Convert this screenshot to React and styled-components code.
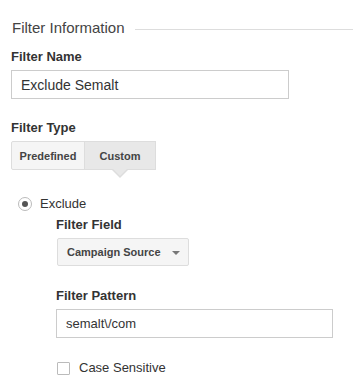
import styled, { createGlobalStyle } from 'styled-components';

const GlobalStyle = createGlobalStyle`
    body {
        margin: 0;
        background: #fff;
        font-family: 'Liberation Sans', Arial, sans-serif;
        color: #333;
    }
`;

const App = () => {
    return (
        <Wrapper>
            <GlobalStyle />
            <Heading>
                <span>Filter Information</span>
                <Rule />
            </Heading>

            <Label $top={12}>Filter Name</Label>
            <TextInput $width={278} defaultValue='Exclude Semalt' />

            <Label $top={21}>Filter Type</Label>
            <Segmented>
                <SegButton $width={74}>Predefined</SegButton>
                <SegButton $width={72} $active>
                    Custom
                    <Pointer />
                </SegButton>
            </Segmented>

            <RadioRow>
                <Radio />
                <span>Exclude</span>
            </RadioRow>

            <Nested>
                <Label $top={5}>Filter Field</Label>
                <Dropdown>
                    Campaign Source
                    <Caret />
                </Dropdown>

                <Label $top={22}>Filter Pattern</Label>
                <TextInput $width={277} $size={13} defaultValue='semalt\/com' />

                <CheckRow>
                    <Checkbox />
                    <span>Case Sensitive</span>
                </CheckRow>
            </Nested>
        </Wrapper>
    );
};

export default App;

const Wrapper = styled.div`
    padding: 19px 0 0 11px;
    width: 353px;
    height: 390px;
    box-sizing: border-box;
    overflow: hidden;
`;

const Heading = styled.div`
    display: flex;
    align-items: center;
    gap: 10px;
    height: 18px;
    font-size: 15px;
    line-height: 18px;
    color: #444;
    padding-left: 1px;
`;

const Rule = styled.div`
    flex: 1;
    border-top: 1px solid #ddd;
    margin-top: 2px;
`;

const Label = styled.div`
    margin-top: ${(p) => p.$top}px;
    font-size: 13px;
    line-height: 16px;
    font-weight: bold;
    color: #333;
`;

const TextInput = styled.input`
    display: block;
    margin-top: 5px;
    width: ${(p) => p.$width}px;
    height: 29px;
    box-sizing: border-box;
    border: 1px solid #ccc;
    padding: 0 9px;
    font-family: 'Liberation Sans', Arial, sans-serif;
    font-size: ${(p) => p.$size || 14}px;
    color: #333;
    outline: none;
`;

const Segmented = styled.div`
    display: flex;
    margin-top: 5px;
`;

const SegButton = styled.div`
    position: relative;
    width: ${(p) => p.$width}px;
    height: 29px;
    box-sizing: border-box;
    display: flex;
    align-items: center;
    justify-content: center;
    border: 1px solid #ddd;
    margin-left: -1px;
    background: ${(p) => (p.$active ? '#e8e8e8' : '#f5f5f5')};
    font-size: 11px;
    font-weight: bold;
    color: #444;

    &:first-child {
        margin-left: 0;
        border-radius: 2px 0 0 2px;
    }
`;

const Pointer = styled.div`
    position: absolute;
    left: 50%;
    bottom: -9px;
    margin-left: -8px;
    width: 0;
    height: 0;
    border-left: 8px solid transparent;
    border-right: 8px solid transparent;
    border-top: 8px solid #ddd;

    &::after {
        content: '';
        position: absolute;
        left: -7px;
        top: -9px;
        border-left: 7px solid transparent;
        border-right: 7px solid transparent;
        border-top: 7px solid #e8e8e8;
    }
`;

const RadioRow = styled.div`
    display: flex;
    align-items: center;
    gap: 8px;
    margin: 26px 0 0 7px;
    font-size: 13px;
    line-height: 16px;
    color: #333;
`;

const Radio = styled.div`
    width: 14px;
    height: 14px;
    box-sizing: border-box;
    border: 1px solid #bbb;
    border-radius: 50%;
    display: flex;
    align-items: center;
    justify-content: center;

    &::after {
        content: '';
        width: 6px;
        height: 6px;
        border-radius: 50%;
        background: #555;
    }
`;

const Nested = styled.div`
    padding-left: 45px;
`;

const Dropdown = styled.div`
    position: relative;
    margin: 5px 0 0 1px;
    width: 132px;
    height: 28px;
    box-sizing: border-box;
    display: flex;
    align-items: center;
    padding-left: 9px;
    border: 1px solid #ddd;
    border-radius: 2px;
    background: #f5f5f5;
    font-size: 11px;
    font-weight: bold;
    color: #444;
`;

const Caret = styled.div`
    position: absolute;
    right: 8px;
    top: 12px;
    border-left: 4px solid transparent;
    border-right: 4px solid transparent;
    border-top: 4px solid #777;
`;

const CheckRow = styled.div`
    display: flex;
    align-items: center;
    gap: 9px;
    margin: 22px 0 0 1px;
    font-size: 13px;
    line-height: 16px;
    color: #333;
`;

const Checkbox = styled.div`
    width: 13px;
    height: 13px;
    box-sizing: border-box;
    border: 1px solid #bbb;
    border-radius: 1px;
    background: #fff;
`;
